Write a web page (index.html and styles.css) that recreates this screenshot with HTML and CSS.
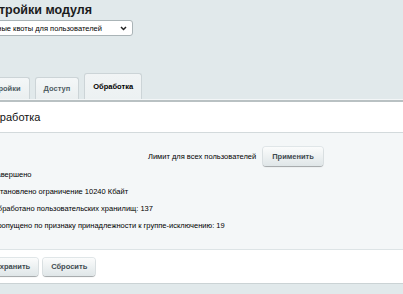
FILE: index.html
```html
<!DOCTYPE html>
<html lang="ru">
<head>
<meta charset="utf-8">
<link rel="stylesheet" href="styles.css">
</head>
<body>
<div class="page">
  <h1 class="title">Настройки модуля</h1>
  <div class="select-wrap">
    <select class="module-select">
      <option>Персональные квоты для пользователей</option>
    </select>
    <svg class="chevron" width="7" height="5" viewBox="0 0 7 5"><path d="M1 1 L3.5 3.5 L6 1" fill="none" stroke="#222" stroke-width="1.5"/></svg>
  </div>
  <div class="tabs">
    <div class="tab">Настройки</div>
    <div class="tab">Доступ</div>
    <div class="tab active">Обработка</div>
  </div>
  <div class="panel">
    <div class="panel-head">Обработка</div>
    <div class="panel-body">
      <div class="limit-row">
        <span class="limit-label">Лимит для всех пользователей</span>
        <button class="btn btn-apply">Применить</button>
      </div>
      <div class="line">Завершено</div>
      <div class="line">Установлено ограничение 10240 Кбайт</div>
      <div class="line">Обработано пользовательских хранилищ: 137</div>
      <div class="line">Пропущено по признаку принадлежности к группе-исключению: 19</div>
    </div>
    <div class="panel-foot">
      <button class="btn">Сохранить</button>
      <button class="btn">Сбросить</button>
    </div>
  </div>
</div>
</body>
</html>
```
FILE: styles.css
```css
html, body {
  margin: 0;
  padding: 0;
}
body {
  background: #e1e9eb;
  font-family: "Liberation Sans", Arial, sans-serif;
  color: #000;
  overflow: hidden;
  width: 403px;
  height: 294px;
}
.page {
  margin-left: -42px;
}
.title {
  margin: 0;
  padding: 3px 0 0 18px;
  font-size: 12.5px;
  line-height: 15px;
  font-weight: bold;
  color: #1b1b1b;
}
.select-wrap {
  position: relative;
  margin-top: 2px;
  height: 16px;
  width: 175px;
}
.module-select {
  display: block;
  -webkit-appearance: none;
  appearance: none;
  width: 175px;
  height: 16px;
  font-family: "Liberation Sans", Arial, sans-serif;
  font-size: 7.5px;
  border: 1px solid #aab4b7;
  border-radius: 3px;
  background: #fff;
  padding: 0;
  color: #000;
}
.chevron {
  position: absolute;
  right: 6px;
  top: 6px;
}
.tabs {
  display: flex;
  align-items: flex-end;
  gap: 5px;
  margin-top: 37px;
  margin-left: 14px;
  height: 26px;
}
.tab {
  height: 21px;
  line-height: 22px;
  padding: 0 8px;
  font-size: 7.5px;
  font-weight: bold;
  color: #4f5d63;
  background: linear-gradient(#f4f7f8, #eaeff0);
  border: 1px solid #ccd4d7;
  border-bottom: none;
  border-radius: 3px 3px 0 0;
}
.tab.active {
  height: 25px;
  line-height: 26px;
  padding: 0 8px;
  color: #000;
  background: linear-gradient(#f1f4f5, #ecf1f2);
}
.panel {
  border-top: 1px solid #f3f6f7;
}
.panel-head {
  background: #fff;
  border-top: 2px solid #b9c1c3;
  height: 30px;
  line-height: 30px;
  padding-left: 27px;
  font-size: 11px;
  color: #111;
  border-bottom: 1px solid #d3dadc;
}
.panel-body {
  background: #f4f7f8;
  padding: 14px 0 15px 34px;
  border-bottom: 1px solid #dde4e6;
}
.limit-row {
  display: flex;
  align-items: center;
  padding-left: 156px;
  height: 19px;
}
.limit-label {
  font-size: 7.5px;
  color: #000;
  margin-right: 7px;
}
.line {
  font-size: 7.5px;
  line-height: 17px;
  color: #000;
}
.panel-foot {
  background: #fff;
  height: 33px;
  display: flex;
  align-items: center;
  gap: 5px;
  padding-left: 24px;
  border-bottom: 1px solid #cbd3d5;
}
.btn {
  font-family: "Liberation Sans", Arial, sans-serif;
  font-size: 7.5px;
  font-weight: bold;
  color: #3e4a4f;
  height: 18px;
  padding: 0 8px;
  border: none;
  border-radius: 3px;
  background: linear-gradient(#fbfcfc, #dfe6e8);
  box-shadow: 0 1px 1px rgba(0,0,0,0.28), 0 0 0 1px #e0e6e8;
}
.btn-apply {
  height: 19px;
  padding: 0 9px;
}
```
